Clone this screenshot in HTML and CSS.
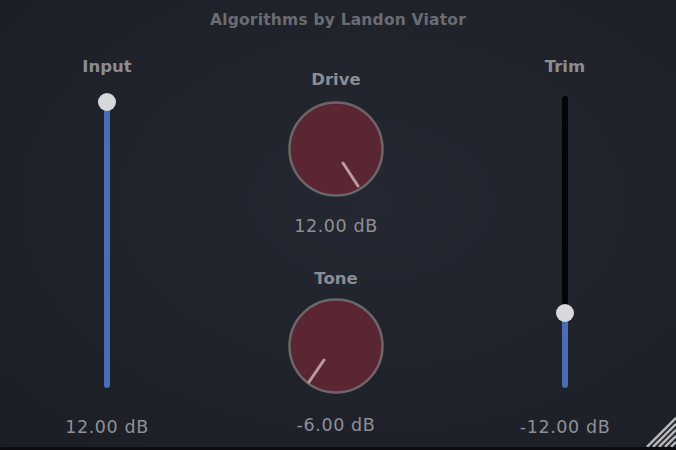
FILE: index.html
```html
<!DOCTYPE html>
<html lang="en">

<head>
    <meta charset="UTF-8">
    <title>Saturation Plugin</title>
    <link rel="stylesheet" href="styles.css">
</head>

<body>
    <div class="editor">
        <div class="title">Algorithms by Landon Viator</div>

        <div class="panel">
            <!-- Input fader -->
            <div class="strip">
                <div class="label">Input</div>
                <div class="track">
                    <div class="fill" style="height: 100%"></div>
                    <div class="thumb" style="top: -3px"></div>
                </div>
                <div class="value">12.00 dB</div>
            </div>

            <!-- Drive + Tone knobs -->
            <div class="knobs">
                <div class="label drive-label">Drive</div>
                <svg class="knob" width="96" height="96" viewBox="0 0 96 96">
                    <circle cx="48" cy="48" r="46.5" class="knob-body" />
                    <line x1="55" y1="62" x2="70" y2="85" class="knob-pointer" />
                </svg>
                <div class="value knob-value">12.00 dB</div>

                <div class="label tone-label">Tone</div>
                <svg class="knob tone-knob" width="96" height="96" viewBox="0 0 96 96">
                    <circle cx="48" cy="48" r="46.5" class="knob-body" />
                    <line x1="36" y1="62" x2="21" y2="84" class="knob-pointer" />
                </svg>
                <div class="value tone-value">-6.00 dB</div>
            </div>

            <!-- Trim fader -->
            <div class="strip">
                <div class="label">Trim</div>
                <div class="track dark">
                    <div class="fill" style="height: 75px"></div>
                    <div class="thumb" style="top: 208px"></div>
                </div>
                <div class="value">-12.00 dB</div>
            </div>
        </div>

        <svg class="grip" width="32" height="32" viewBox="0 0 32 32">
            <line x1="32" y1="3" x2="3" y2="32" />
            <line x1="32" y1="9" x2="9" y2="32" />
            <line x1="32" y1="15" x2="15" y2="32" />
            <line x1="32" y1="21" x2="21" y2="32" />
            <line x1="32" y1="27" x2="27" y2="32" />
        </svg>
    </div>
</body>

</html>
```

FILE: styles.css
```css
html {
    background-color: #0c0d10;
}

body {
    margin: 0;
    font-family: "DejaVu Sans", Verdana, sans-serif;
}

.editor {
    position: relative;
    width: 676px;
    height: 447px;
    overflow: hidden;
    background: radial-gradient(ellipse at 55% 45%, #252832 0%, #1f222a 60%, #1c1e26 100%);
}

.title {
    height: 40px;
    line-height: 40px;
    text-align: center;
    font-size: 15.5px;
    letter-spacing: 0.2px;
    font-weight: bold;
    color: #6a6c73;
}

.panel {
    display: grid;
    grid-template-columns: 214px 244px 214px;
}

.strip,
.knobs {
    display: flex;
    flex-direction: column;
    align-items: center;
}

.label {
    height: 20px;
    line-height: 20px;
    font-size: 16.5px;
    font-weight: bold;
    color: #8b8d93;
}

.strip .label {
    margin-top: 17px;
}

.value {
    height: 20px;
    line-height: 20px;
    font-size: 17.5px;
    letter-spacing: 0.6px;
    color: #8e9096;
}

.strip .value {
    margin-top: 29px;
}

/* faders */
.track {
    position: relative;
    margin-top: 19px;
    width: 6px;
    height: 292px;
    border-radius: 3px;
}

.track.dark {
    background-color: #050506;
}

.fill {
    position: absolute;
    left: 0;
    bottom: 0;
    width: 6px;
    border-radius: 3px;
    background-color: #4a6db3;
}

.thumb {
    position: absolute;
    left: -6px;
    width: 18px;
    height: 18px;
    border-radius: 50%;
    background-color: #d6d8dc;
}

/* knobs */
.drive-label {
    margin-top: 30px;
}

.knob {
    margin-top: 11px;
    display: block;
}

.tone-knob {
    margin-top: 9px;
}

.knob-body {
    fill: #5b2634;
    stroke: #6c6668;
    stroke-width: 2.5;
}

.knob-pointer {
    stroke: #b99a9d;
    stroke-width: 3;
    stroke-linecap: round;
}

.knob-value {
    margin-top: 19px;
}

.tone-label {
    margin-top: 33px;
}

.tone-value {
    margin-top: 21px;
}

/* resize corner */
.grip {
    position: absolute;
    right: 0;
    bottom: 0;
}

.grip line {
    stroke: #b4b6ba;
    stroke-width: 2.5;
}
```
